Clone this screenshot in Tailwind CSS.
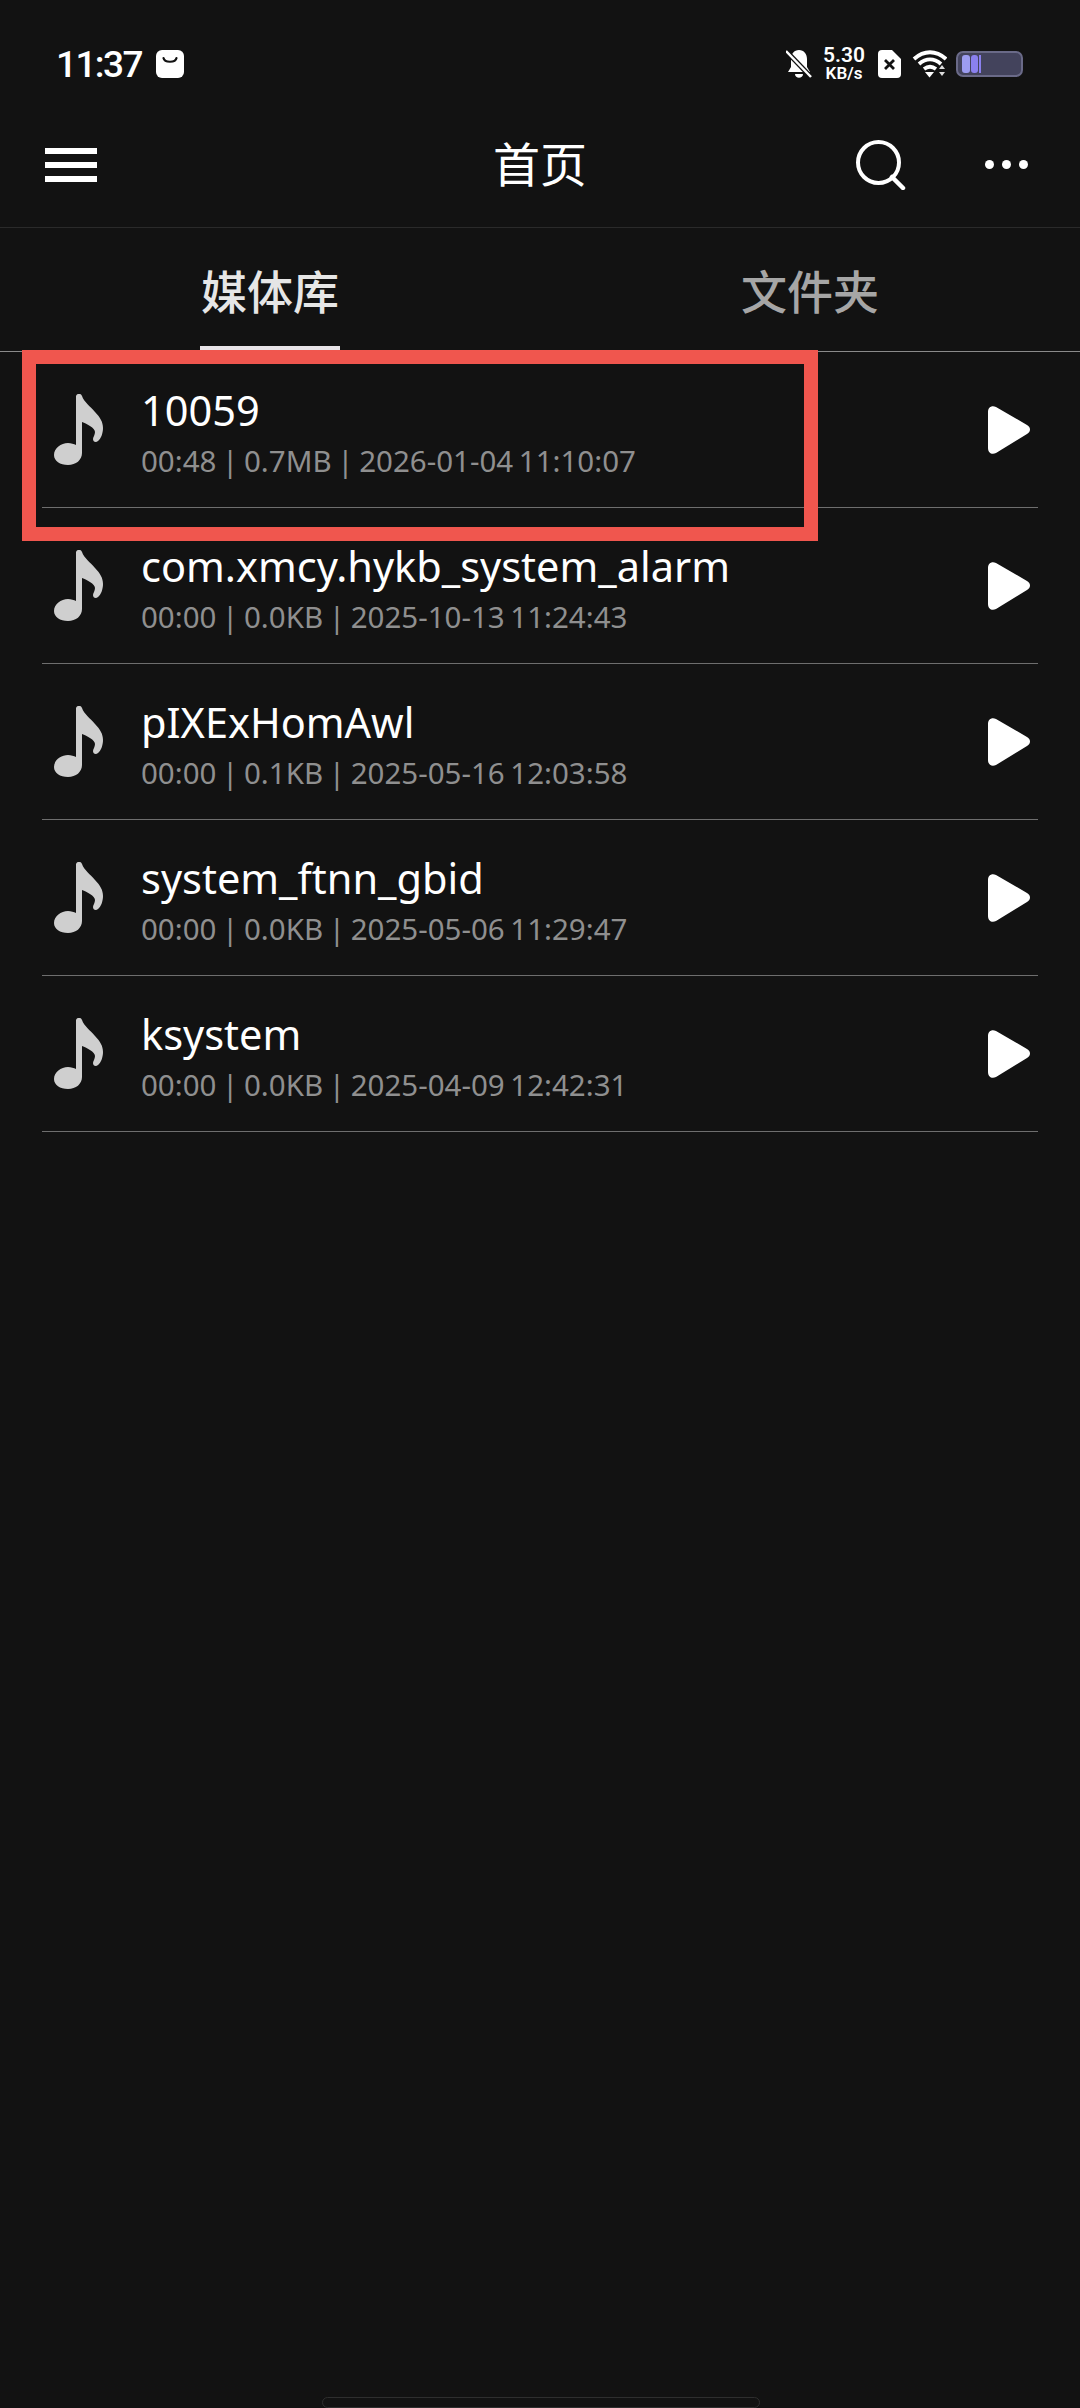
<!DOCTYPE html>
<html lang="zh">
<head>
    <meta charset="UTF-8">
    <title>首页</title>
    <script src="https://cdn.jsdelivr.net/npm/@tailwindcss/browser@4"></script>
</head>
<body class="bg-[#121212]">
<div class="relative w-[1080px] h-[2408px] overflow-hidden bg-[#121212] text-white font-['Noto_Sans','Noto_Sans_CJK_SC',sans-serif]">

    <!-- status bar -->
    <div class="h-[115px] pl-[56px] pr-[57px] pt-[13px] flex items-center justify-between font-['Roboto','Noto_Sans',sans-serif]">
        <div class="flex items-center gap-[15px]">
            <span class="w-[85px] text-[37px] font-medium leading-none tracking-[-1.6px] whitespace-nowrap">11:37</span>
            <svg width="28" height="28" viewBox="0 0 28 28"><rect width="28" height="28" rx="6" fill="#fff"/><path d="M7.500 8c1 5 12 5 13 0" fill="none" stroke="#121212" stroke-width="2.200" stroke-linecap="round"/></svg>
        </div>
        <div class="flex items-center">
            <svg width="26" height="30" viewBox="0 0 26 30"><path d="M13 1c5 0 8 4 8 9v8l3 5H2l3-5v-8c0-5 3-9 8-9z M9 25h8c0 5-8 5-8 0z" fill="#fff"/><path d="M0 2l25 26" stroke="#121212" stroke-width="5"/><path d="M0 2l25 26" stroke="#fff" stroke-width="2.500"/></svg>
            <div class="ml-[10px] w-[44px] flex flex-col items-center font-semibold">
                <span class="text-[21px] leading-[19px]">5.30</span>
                <span class="text-[17px] leading-[17px]">KB/s</span>
            </div>
            <svg class="ml-[12px]" width="23" height="28" viewBox="0 0 23 28"><path d="M4 0h10l9 9v15a4 4 0 0 1-4 4H4a4 4 0 0 1-4-4V4a4 4 0 0 1 4-4z" fill="#fff"/><path d="M7 10l9 9M16 10l-9 9" stroke="#121212" stroke-width="2.800"/></svg>
            <svg class="ml-[11px]" width="35" height="28" viewBox="0 0 35 28"><path d="M2 9c10-9 22-9 32 0M7 14c7-6 15-6 22 0M12 19c4-3 8-3 12 0" fill="none" stroke="#fff" stroke-width="3.800"/><path d="M13 22h9l-4.500 5.500z" fill="#fff"/><path d="M27 19l3-4 3 4zM27 22h6l-3 4z" fill="#ddd"/></svg>
            <div class="ml-[9px] w-[67px] h-[26px] rounded-[7px] border-[2px] border-[#6a6a88] bg-[#43435c] flex items-center pl-[4px] overflow-hidden">
                <div class="w-[8px] h-[18px] rounded-[3px] bg-[#9c9cf0]"></div>
                <div class="ml-[1px] w-[7px] h-[18px] rounded-[3px] bg-[#8a80ee]"></div>
                <div class="ml-[1px] w-[2px] h-[18px] bg-[#8a80ee]"></div>
            </div>
        </div>
    </div>

    <!-- title bar -->
    <header class="relative h-[113px] border-b border-[#2a2a2a] flex items-center justify-between pl-[45px] pr-[52px] pb-[13px]">
        <div class="w-[52px] flex flex-col gap-[8px]">
            <div class="h-[6px] bg-white"></div>
            <div class="h-[6px] bg-white"></div>
            <div class="h-[6px] bg-white"></div>
        </div>
        <h1 class="absolute left-0 right-0 text-center text-[47px] font-normal leading-none">首页</h1>
        <div class="flex items-center gap-[79px]">
            <svg width="50" height="50" viewBox="0 0 50 50"><circle cx="22.500" cy="22.500" r="20.500" fill="none" stroke="#fff" stroke-width="4"/><path d="M36 37l11 11" stroke="#fff" stroke-width="4.500" stroke-linecap="round"/></svg>
            <div class="flex gap-[8px]">
                <div class="w-[9px] h-[9px] rounded-full bg-white"></div>
                <div class="w-[9px] h-[9px] rounded-full bg-white"></div>
                <div class="w-[9px] h-[9px] rounded-full bg-white"></div>
            </div>
        </div>
    </header>

    <!-- tabs -->
    <nav class="h-[124px] border-b border-[#8a8a8a] flex">
        <div class="w-[540px] flex justify-center">
            <div class="relative w-[140px] flex items-center justify-center pt-[2px] text-[46px] font-medium text-[#e6e6e6] leading-none">
                媒体库
                <div class="absolute left-0 right-0 bottom-0 h-[5px] bg-[#e8e4e8]"></div>
            </div>
        </div>
        <div class="w-[540px] flex items-center justify-center pt-[2px] text-[46px] font-medium text-[#a6a6a6] leading-none">文件夹</div>
    </nav>

    <!-- list -->
    <ul class="mx-[42px]">
        <li class="h-[156px] border-b border-[#6e6e6e] flex">
            <svg class="ml-[11px] mt-[42px]" width="50" height="72" viewBox="0 0 50 72"><use href="#note"/></svg>
            <div class="ml-[38px] flex-1 pt-[32px]">
                <div class="text-[41.500px] leading-[52px]">10059</div>
                <div class="text-[29.500px] [word-spacing:-2px] leading-[36px] mt-[7px] text-[#8f8f8f]">00:48 | 0.7MB | 2026-01-04 11:10:07</div>
            </div>
            <svg class="mt-[54px] mr-[7px]" width="44" height="48" viewBox="0 0 44 48"><use href="#play"/></svg>
        </li>
        <li class="h-[156px] border-b border-[#6e6e6e] flex">
            <svg class="ml-[11px] mt-[42px]" width="50" height="72" viewBox="0 0 50 72"><use href="#note"/></svg>
            <div class="ml-[38px] flex-1 pt-[32px]">
                <div class="text-[41.500px] leading-[52px]">com.xmcy.hykb_system_alarm</div>
                <div class="text-[29.500px] [word-spacing:-2px] leading-[36px] mt-[7px] text-[#8f8f8f]">00:00 | 0.0KB | 2025-10-13 11:24:43</div>
            </div>
            <svg class="mt-[54px] mr-[7px]" width="44" height="48" viewBox="0 0 44 48"><use href="#play"/></svg>
        </li>
        <li class="h-[156px] border-b border-[#6e6e6e] flex">
            <svg class="ml-[11px] mt-[42px]" width="50" height="72" viewBox="0 0 50 72"><use href="#note"/></svg>
            <div class="ml-[38px] flex-1 pt-[32px]">
                <div class="text-[41.500px] leading-[52px]">pIXExHomAwl</div>
                <div class="text-[29.500px] [word-spacing:-2px] leading-[36px] mt-[7px] text-[#8f8f8f]">00:00 | 0.1KB | 2025-05-16 12:03:58</div>
            </div>
            <svg class="mt-[54px] mr-[7px]" width="44" height="48" viewBox="0 0 44 48"><use href="#play"/></svg>
        </li>
        <li class="h-[156px] border-b border-[#6e6e6e] flex">
            <svg class="ml-[11px] mt-[42px]" width="50" height="72" viewBox="0 0 50 72"><use href="#note"/></svg>
            <div class="ml-[38px] flex-1 pt-[32px]">
                <div class="text-[41.500px] leading-[52px]">system_ftnn_gbid</div>
                <div class="text-[29.500px] [word-spacing:-2px] leading-[36px] mt-[7px] text-[#8f8f8f]">00:00 | 0.0KB | 2025-05-06 11:29:47</div>
            </div>
            <svg class="mt-[54px] mr-[7px]" width="44" height="48" viewBox="0 0 44 48"><use href="#play"/></svg>
        </li>
        <li class="h-[156px] border-b border-[#6e6e6e] flex">
            <svg class="ml-[11px] mt-[42px]" width="50" height="72" viewBox="0 0 50 72"><use href="#note"/></svg>
            <div class="ml-[38px] flex-1 pt-[32px]">
                <div class="text-[41.500px] leading-[52px]">ksystem</div>
                <div class="text-[29.500px] [word-spacing:-2px] leading-[36px] mt-[7px] text-[#8f8f8f]">00:00 | 0.0KB | 2025-04-09 12:42:31</div>
            </div>
            <svg class="mt-[54px] mr-[7px]" width="44" height="48" viewBox="0 0 44 48"><use href="#play"/></svg>
        </li>
    </ul>

    <!-- red highlight drawn over the first row -->
    <div class="absolute left-[22px] top-[350px] w-[796px] h-[191px] border-[14px] border-[#f0564e]"></div>

    <!-- home indicator -->
    <div class="absolute left-[322px] top-[2397px] w-[438px] h-[11px] rounded-full border border-[#2e2e2e]"></div>

    <svg width="0" height="0" class="absolute">
        <defs>
            <path id="note" fill="#cfcfcf" d="M23 2c1-3 5-3 6 0 2 6 8 10 13 16 5 5 8 10 8 16 0 5-2 11-5 13-2 2-5 1-5-2 0-2 2-4 2-7 0-4-8-8-13-10v31c0 7-6 12-14 12C7 71 1 67 1 61c0-7 7-12 14-12 3 0 6 1 8 2z"/>
            <path id="play" fill="#fff" d="M1 6c0-5 4-7 8-5l31 18c4 2 4 7 0 9L9 47c-4 2-8 0-8-5z"/>
        </defs>
    </svg>
</div>
</body>
</html>
